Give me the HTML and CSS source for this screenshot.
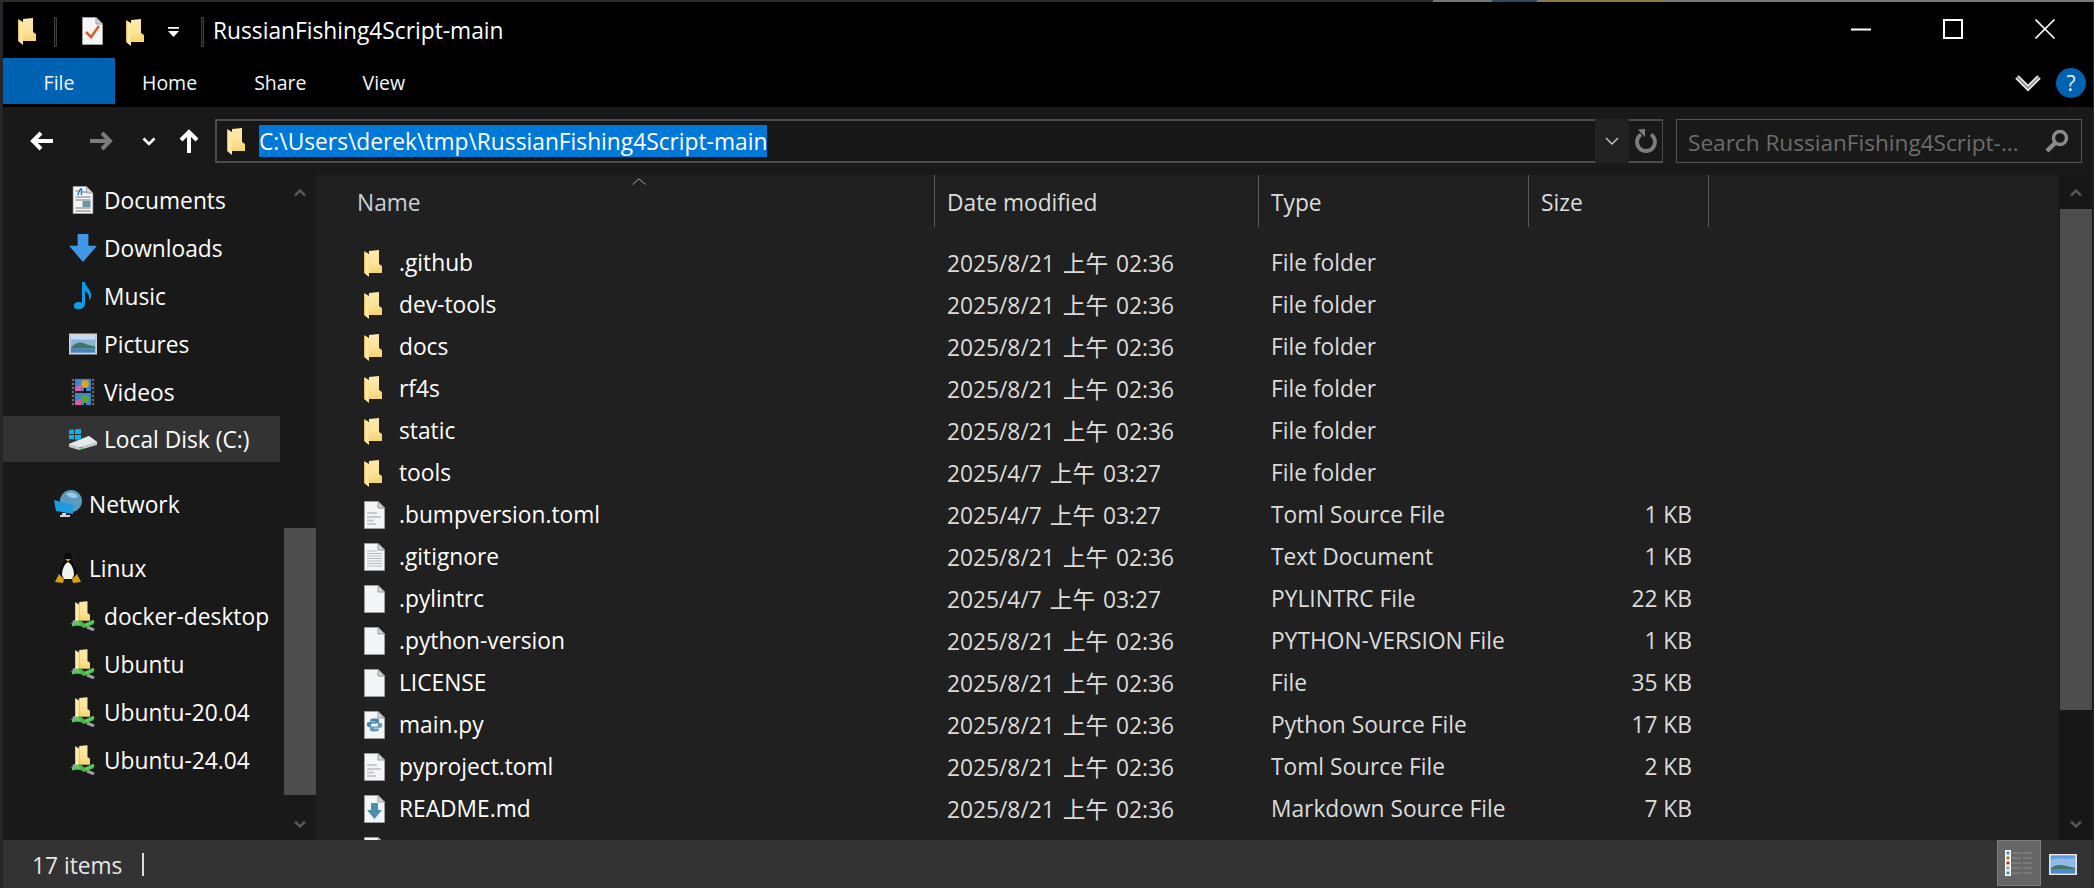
FILE: index.html
```html
<!DOCTYPE html>
<html lang="en">
<head>
<meta charset="utf-8">
<title>RussianFishing4Script-main</title>
<link rel="stylesheet" href="styles.css">
</head>
<body>
<svg class="defs" width="0" height="0" aria-hidden="true">
  <defs>
    <linearGradient id="flap" x1="0" x2="1" y1="0" y2="0"><stop offset="0" stop-color="#dfae48"/><stop offset=".4" stop-color="#ffeeb4"/><stop offset="1" stop-color="#fbe08f"/></linearGradient>
    <linearGradient id="front" x1="0" x2="0" y1="0" y2="1"><stop offset="0" stop-color="#fdeaae"/><stop offset=".55" stop-color="#fde39a"/><stop offset="1" stop-color="#f7d272"/></linearGradient>
    <symbol id="folder" viewBox="0 0 18 27">
      <path d="M5 1L15 0V14L18 20V23H5Z" fill="url(#front)"/>
      <path d="M15 14L18 16V23H5L15 20Z" fill="#f8d778"/>
      <path d="M0 1L5 4V27L0 23Z" fill="url(#flap)"/>
    </symbol>
    <symbol id="page" viewBox="0 0 21 28">
      <path d="M.5.5H14L20.5 7V27.5H.5Z" fill="#f4f5f7" stroke="#9d9d9d"/>
      <path d="M14 .5V7H20.5Z" fill="#d4d4d4" stroke="#9d9d9d"/>
    </symbol>
    <symbol id="toml" viewBox="0 0 21 28">
      <use href="#page"/>
      <path d="M3 12H13M3 16H17M3 19.5H10M3 23H12" stroke="#c9cacb" stroke-width="2"/>
    </symbol>
    <symbol id="text" viewBox="0 0 21 28">
      <use href="#page"/>
      <path d="M3 8H13M3 10.5H18M3 13H18M3 15.500H18M3 18H18M3 20.500H18M3 23H18" stroke="#b9b9b9" stroke-width="1"/>
    </symbol>
    <symbol id="py" viewBox="0 0 21 28">
      <use href="#page"/>
      <g transform="translate(0,2.460) scale(1,.72)">
        <path d="M10 7C6 7 6 9 6 11H11V12H5C2 12 2 19 5 19H7V16C7 14 8 14 10 14H13C14 14 15 13 15 12V9C15 7 13 7 10 7Z" fill="#4a86a8"/>
        <path d="M11 25C15 25 15 23 15 21H10V20H16C19 20 19 13 16 13H14V16C14 18 13 18 11 18H8C7 18 6 19 6 20V23C6 25 8 25 11 25Z" fill="#5b9cb8"/>
      </g>
    </symbol>
    <symbol id="md" viewBox="0 0 21 28">
      <use href="#page"/>
      <path d="M7 8H14V15H18L10.500 24L3 15H7Z" fill="#4a8fb0"/>
    </symbol>
    <symbol id="mount" viewBox="0 0 24 30">
      <use href="#folder" x="4" y="0" width="15" height="23"/>
      <path d="M0 22L9 19L14 23L22 20L23 23L13 27L8 24L2 25Z" fill="#49b94a"/>
      <path d="M2 20L9 24M16 26L23 29" stroke="#9c9c9c" stroke-width="3"/>
      <path d="M1 24L8 22M14 24L23 20" stroke="#5ccb5a" stroke-width="3"/>
    </symbol>
    <symbol id="chev" viewBox="0 0 12 8">
      <path d="M1 6.500L6 1.500L11 6.500" fill="none" stroke="currentColor" stroke-width="2.500"/>
    </symbol>
  </defs>
</svg>

<div class="window">
  <header class="titlebar">
    <svg class="qa-folder-main"><use href="#folder"/></svg>
    <span class="qa-sep"></span>
    <svg class="qa-doc" viewBox="0 0 21 28">
      <use href="#page"/>
      <path d="M4 15L9 20L17 9" fill="none" stroke="#e5582a" stroke-width="2.500"/>
    </svg>
    <svg class="qa-folder"><use href="#folder"/></svg>
    <svg class="qa-drop" viewBox="0 0 10 9"><path d="M0 0H10V1.500H0ZM0 3.500H10L5 9Z" fill="#fff"/></svg>
    <span class="qa-sep qa-sep-last"></span>
    <span class="title">RussianFishing4Script-main</span>
    <div class="caption">
      <svg class="cap-btn" viewBox="0 0 21 21"><path d="M0 10.500H20" stroke="#fff" stroke-width="2"/></svg>
      <svg class="cap-btn" viewBox="0 0 21 21"><rect x="1" y="1" width="18" height="18" fill="none" stroke="#fff" stroke-width="2"/></svg>
      <svg class="cap-btn" viewBox="0 0 21 21"><path d="M.5.500L19.500 19.500M19.500.500L.5 19.500" stroke="#fff" stroke-width="1.600"/></svg>
    </div>
  </header>

  <nav class="ribbon">
    <span class="tab tab-file">File</span>
    <span class="tab tab-home">Home</span>
    <span class="tab tab-share">Share</span>
    <span class="tab tab-view">View</span>
    <svg class="ribbon-collapse" viewBox="0 0 26 18"><path d="M2 3L13 14L24 3" fill="none" stroke="#e4e4e4" stroke-width="5"/><path d="M2 3L13 14L24 3" fill="none" stroke="#8a8a8a" stroke-width="1.500"/></svg>
    <span class="help">?</span>
  </nav>

  <div class="addressbar">
    <svg class="nav-arrow nav-back" viewBox="0 0 24 20"><path d="M23 10H3M11 2L3 10L11 18" fill="none" stroke="#fff" stroke-width="4"/></svg>
    <svg class="nav-arrow nav-forward" viewBox="0 0 24 20"><path d="M1 10H21M13 2L21 10L13 18" fill="none" stroke="#7b7b7b" stroke-width="4"/></svg>
    <svg class="nav-recent" viewBox="0 0 14 9"><path d="M1.500 1.500L7 7L12.500 1.500" fill="none" stroke="#fff" stroke-width="2.600"/></svg>
    <svg class="nav-up" viewBox="0 0 20 24"><path d="M10 24V3M2 11L10 3L18 11" fill="none" stroke="#fff" stroke-width="4"/></svg>
    <div class="address">
      <svg class="addr-folder"><use href="#folder"/></svg>
      <span class="addr-text">C:\Users\derek\tmp\RussianFishing4Script-main</span>
      <span class="addr-drop"><svg class="addr-chev" viewBox="0 0 14 8"><path d="M1 1L7 7L13 1" fill="none" stroke="#c8c8c8" stroke-width="1.400"/></svg></span>
      <span class="addr-refresh"><svg class="refresh" viewBox="0 0 22 24"><path d="M6 5.500A9 9 0 1 0 16 5.500" fill="none" stroke="#7d7d7d" stroke-width="3.800"/><path d="M3 .5L10 0V8Z" fill="#7d7d7d"/></svg></span>
    </div>
    <div class="search">
      <span class="search-text">Search RussianFishing4Script-...</span>
      <svg class="search-icon" viewBox="0 0 24 24"><circle cx="15" cy="9" r="6.500" fill="none" stroke="#8c8c8c" stroke-width="3.400"/><path d="M10 14L2 22" stroke="#8c8c8c" stroke-width="4.500"/></svg>
    </div>
  </div>

  <main class="content">
    <aside class="navpane">
      <ul class="tree">
        <li class="item lvl2">
          <svg class="ic" viewBox="0 0 21 28"><use href="#page"/><path d="M3 5H7M9 6H14M3 11H18M3 14H18M3 22H18M3 25H18" stroke="#777" stroke-width="1"/><path d="M5 9L8 3H9V9" fill="none" stroke="#2a7cc4" stroke-width="1.500"/><rect x="10" y="15" width="8" height="6" fill="#6a97a0"/></svg>
          <span>Documents</span>
        </li>
        <li class="item lvl2">
          <svg class="ic" viewBox="0 0 26 26"><path d="M8 0H18V11H26L13 26L0 11H8Z" fill="#3f97e5"/></svg>
          <span>Downloads</span>
        </li>
        <li class="item lvl2">
          <svg class="ic" viewBox="0 0 20 28"><path d="M9 0H12C12 5 19 7 18 15C17.500 17 16.500 18 16 18C17 13 14 10 12 9V22C12 26 7 28 3 27C-1 25 1 20 5 20C7 20 8 20 9 21Z" fill="#0d9be6"/></svg>
          <span>Music</span>
        </li>
        <li class="item lvl2">
          <svg class="ic" viewBox="0 0 28 21"><rect x=".75" y=".75" width="26.500" height="19.500" fill="#8fb4d6" stroke="#cfd3d6" stroke-width="1.500"/><path d="M2 6H26V1.500H2Z" fill="#c5def3"/><path d="M2 14C8 8 12 8 18 11L26 13V15H2Z" fill="#3f7565"/><rect x="2" y="15" width="24" height="4" fill="#4a86bb"/></svg>
          <span>Pictures</span>
        </li>
        <li class="item lvl2">
          <svg class="ic" viewBox="0 0 24 28"><rect width="24" height="28" fill="#222"/><path d="M2 1V28M22 1V28" stroke="#6a6a6a" stroke-width="2" stroke-dasharray="2 2"/><rect x="4" y="1" width="16" height="12" fill="#3f82cf"/><rect x="4" y="15" width="16" height="12" fill="#3f82cf"/><path d="M4 9L10 7L10 13H4ZM4 23L10 21V27H4Z" fill="#d85fa8"/><circle cx="14" cy="6" r="4" fill="#d2a72c"/><circle cx="14" cy="21" r="4" fill="#5aa53a"/><path d="M14 10V15M14 25V27" stroke="#000" stroke-width="2"/></svg>
          <span>Videos</span>
        </li>
        <li class="item lvl2 selected">
          <svg class="ic ic-disk" viewBox="0 0 28 21"><path d="M0 15L20 7L28 13V16L10 21L0 18Z" fill="#c6c9cc"/><path d="M0 15L10 18L28 13L20 7Z" fill="#e6e8ea"/><rect x="10" y="18" width="4" height="1.500" fill="#41c050"/><path d="M0 1L5 .4V5H0ZM6 .3L12 0V5H6ZM0 6H5V10.500L0 10ZM6 6H12V11L6 10.600Z" fill="#08b3ef"/></svg>
          <span>Local Disk (C:)</span>
        </li>
        <li class="item lvl1 group">
          <svg class="ic" viewBox="0 0 28 28"><circle cx="17" cy="11" r="11" fill="#5c9ac2"/><path d="M12 4C17 1 22 3 24 7C21 9 15 8 12 4Z" fill="#9fc7de"/><path d="M0 10L19 15V24L2 21Z" fill="#1a9de0"/><path d="M8 23H12V25H16V27H6V25H8Z" fill="#cfd4d8"/></svg>
          <span>Network</span>
        </li>
        <li class="item lvl1 group">
          <svg class="ic ic-tall" viewBox="0 0 26 32"><path d="M13 0C8 0 8 5 8 9C8 12 3 16 3 23L5 27H21L23 23C23 16 18 12 18 9C18 5 18 0 13 0Z" fill="#0c0c0c" stroke="#333" stroke-width=".5"/><path d="M13 10C9 12 7 18 7 23L9 27H17L19 23C19 18 17 12 13 10Z" fill="#f3f3f3"/><path d="M10 7H16L13 9.500Z" fill="#d7a016"/><path d="M4 22L9 27L8 31L0 30ZM22 22L17 27L18 31L26 30Z" fill="#d7a016"/></svg>
          <span>Linux</span>
        </li>
        <li class="item lvl2"><svg class="ic ic-mount"><use href="#mount"/></svg><span>docker-desktop</span></li>
        <li class="item lvl2"><svg class="ic ic-mount"><use href="#mount"/></svg><span>Ubuntu</span></li>
        <li class="item lvl2"><svg class="ic ic-mount"><use href="#mount"/></svg><span>Ubuntu-20.04</span></li>
        <li class="item lvl2"><svg class="ic ic-mount"><use href="#mount"/></svg><span>Ubuntu-24.04</span></li>
      </ul>
      <div class="vscroll vscroll-nav">
        <svg class="sb-up"><use href="#chev"/></svg>
        <span class="sb-thumb"></span>
        <svg class="sb-down"><use href="#chev"/></svg>
      </div>
    </aside>

    <section class="list">
      <div class="files">
        <div class="row head">
          <span class="cell name">Name</span><span class="cell date">Date modified</span><span class="cell type">Type</span><span class="cell size">Size</span>
          <svg class="sort" viewBox="0 0 14 7"><path d="M.5 6.500L7 .8L13.500 6.500" fill="none" stroke="#a8a8a8" stroke-width="1"/></svg>
        </div>
        <div class="row file"><span class="cell name"><svg class="fi-folder"><use href="#folder"/></svg><span class="label">.github</span></span><span class="cell date"><span class="label">2025/8/21 上午 02:36</span></span><span class="cell type"><span class="label">File folder</span></span><span class="cell size"></span></div>
        <div class="row file"><span class="cell name"><svg class="fi-folder"><use href="#folder"/></svg><span class="label">dev-tools</span></span><span class="cell date"><span class="label">2025/8/21 上午 02:36</span></span><span class="cell type"><span class="label">File folder</span></span><span class="cell size"></span></div>
        <div class="row file"><span class="cell name"><svg class="fi-folder"><use href="#folder"/></svg><span class="label">docs</span></span><span class="cell date"><span class="label">2025/8/21 上午 02:36</span></span><span class="cell type"><span class="label">File folder</span></span><span class="cell size"></span></div>
        <div class="row file"><span class="cell name"><svg class="fi-folder"><use href="#folder"/></svg><span class="label">rf4s</span></span><span class="cell date"><span class="label">2025/8/21 上午 02:36</span></span><span class="cell type"><span class="label">File folder</span></span><span class="cell size"></span></div>
        <div class="row file"><span class="cell name"><svg class="fi-folder"><use href="#folder"/></svg><span class="label">static</span></span><span class="cell date"><span class="label">2025/8/21 上午 02:36</span></span><span class="cell type"><span class="label">File folder</span></span><span class="cell size"></span></div>
        <div class="row file"><span class="cell name"><svg class="fi-folder"><use href="#folder"/></svg><span class="label">tools</span></span><span class="cell date"><span class="label">2025/4/7 上午 03:27</span></span><span class="cell type"><span class="label">File folder</span></span><span class="cell size"></span></div>
        <div class="row file"><span class="cell name"><svg class="fi-page"><use href="#toml"/></svg><span class="label">.bumpversion.toml</span></span><span class="cell date"><span class="label">2025/4/7 上午 03:27</span></span><span class="cell type"><span class="label">Toml Source File</span></span><span class="cell size"><span class="label">1 KB</span></span></div>
        <div class="row file"><span class="cell name"><svg class="fi-page"><use href="#text"/></svg><span class="label">.gitignore</span></span><span class="cell date"><span class="label">2025/8/21 上午 02:36</span></span><span class="cell type"><span class="label">Text Document</span></span><span class="cell size"><span class="label">1 KB</span></span></div>
        <div class="row file"><span class="cell name"><svg class="fi-page"><use href="#page"/></svg><span class="label">.pylintrc</span></span><span class="cell date"><span class="label">2025/4/7 上午 03:27</span></span><span class="cell type"><span class="label">PYLINTRC File</span></span><span class="cell size"><span class="label">22 KB</span></span></div>
        <div class="row file"><span class="cell name"><svg class="fi-page"><use href="#page"/></svg><span class="label">.python-version</span></span><span class="cell date"><span class="label">2025/8/21 上午 02:36</span></span><span class="cell type"><span class="label">PYTHON-VERSION File</span></span><span class="cell size"><span class="label">1 KB</span></span></div>
        <div class="row file"><span class="cell name"><svg class="fi-page"><use href="#page"/></svg><span class="label">LICENSE</span></span><span class="cell date"><span class="label">2025/8/21 上午 02:36</span></span><span class="cell type"><span class="label">File</span></span><span class="cell size"><span class="label">35 KB</span></span></div>
        <div class="row file"><span class="cell name"><svg class="fi-page"><use href="#py"/></svg><span class="label">main.py</span></span><span class="cell date"><span class="label">2025/8/21 上午 02:36</span></span><span class="cell type"><span class="label">Python Source File</span></span><span class="cell size"><span class="label">17 KB</span></span></div>
        <div class="row file"><span class="cell name"><svg class="fi-page"><use href="#toml"/></svg><span class="label">pyproject.toml</span></span><span class="cell date"><span class="label">2025/8/21 上午 02:36</span></span><span class="cell type"><span class="label">Toml Source File</span></span><span class="cell size"><span class="label">2 KB</span></span></div>
        <div class="row file"><span class="cell name"><svg class="fi-page"><use href="#md"/></svg><span class="label">README.md</span></span><span class="cell date"><span class="label">2025/8/21 上午 02:36</span></span><span class="cell type"><span class="label">Markdown Source File</span></span><span class="cell size"><span class="label">7 KB</span></span></div>
        <div class="row file"><span class="cell name"><svg class="fi-page"><use href="#text"/></svg></span><span class="cell date"><span class="label">2025/8/21 上午 02:36</span></span><span class="cell type"></span><span class="cell size"></span></div>
      </div>
      <div class="vscroll vscroll-list">
        <svg class="sb-up"><use href="#chev"/></svg>
        <span class="sb-thumb"></span>
        <svg class="sb-down"><use href="#chev"/></svg>
      </div>
    </section>
  </main>

  <footer class="status">
    <span class="count">17 items</span>
    <span class="status-sep"></span>
    <span class="view-details">
      <svg class="details-icon" viewBox="0 0 28 26"><rect width="6" height="26" fill="#fff"/><rect x="1.500" y="1.500" width="3" height="3" fill="#3f8fb5"/><rect x="1.500" y="6.500" width="3" height="3" fill="#8a7f24"/><rect x="1.500" y="11.500" width="3" height="3" fill="#c0281e"/><rect x="1.500" y="16.500" width="3" height="3" fill="#7fa07f"/><rect x="1.500" y="21.500" width="3" height="3" fill="#3f8fb5"/><path d="M7 3H16M18 3H27M7 8H16M18 8H27M7 13H16M18 13H27M7 18H16M18 18H27M7 23H16M18 23H27" stroke="#8d8d8d" stroke-width="1"/></svg>
    </span>
    <svg class="view-large" viewBox="0 0 28 21"><rect x=".75" y=".75" width="26.500" height="19.500" fill="#8fbbe6" stroke="#e6e6e6" stroke-width="1.500"/><path d="M2 6C8 3 14 6 26 4V1.500H2Z" fill="#5f9de0"/><path d="M2 14C8 9 14 11 26 14V15H2Z" fill="#3f7565"/><rect x="2" y="15" width="24" height="4.500" fill="#4e8ac6"/></svg>
  </footer>
</div>
</body>
</html>
```

FILE: styles.css
```css
* { box-sizing: border-box; }

html, body {
  margin: 0;
  height: 100%;
  overflow: hidden;
}

html {
  background: #24262b;
}

body {
  padding: 2px 1px 0 3px;
  background: linear-gradient(90deg, #2d2d30 0 1433px, #777 1433px 1492px, #334a5e 1492px 1537px, #777 1537px 1543px, #8a7a3c 1543px 1664px, #7a7a7a 1664px) top / 100% 2px no-repeat;
  font-family: "Open Sans", "Noto Sans CJK TC", sans-serif;
  font-size: 22.75px;
  color: #fff;
}

.defs { position: absolute; }

.window {
  height: 886px;
  display: flex;
  flex-direction: column;
  background: #000;
}

/* title bar */
.titlebar {
  height: 56px;
  flex: none;
  display: flex;
  align-items: center;
  padding-left: 15px;
  background: #000;
}
.qa-folder-main { width: 18px; height: 27px; margin-top: 3px; }
.qa-sep { width: 3px; height: 30px; border: 1px solid #3f3f3f; background: #111; margin-left: 18px; margin-top: 3px; }
.qa-doc { width: 21px; height: 28px; margin-left: 25px; margin-top: 2px; }
.qa-folder { width: 18px; height: 27px; margin-left: 23px; margin-top: 5px; }
.qa-drop { width: 11px; height: 10px; margin-left: 24px; margin-top: 3px; }
.qa-sep-last { margin-left: 22px; }
.title { margin-left: 9px; font-size: 22.75px; line-height: 30px; margin-top: 2px; }
.caption { margin-left: auto; display: flex; gap: 71px; padding-right: 37px; margin-top: -2px; }
.cap-btn { width: 21px; height: 21px; }

/* ribbon */
.ribbon {
  height: 49px;
  flex: none;
  display: flex;
  align-items: flex-start;
  background: #000;
}
.tab { display: block; line-height: 50px; height: 46px; font-size: 19.500px; color: #f2f5f8; }
.tab-file { width: 112px; background: #0063b1; text-align: center; }
.tab-home { margin-left: 27px; }
.tab-share { margin-left: 57px; }
.tab-view { margin-left: 56px; }
.ribbon-collapse { width: 26px; height: 18px; margin-left: auto; margin-top: 16px; }
.help {
  width: 30px; height: 30px; margin: 10px 7px 0 15px;
  border-radius: 50%;
  background: #0063b1;
  text-align: center;
  line-height: 30px;
  font-size: 21px;
  color: #e8f0f8;
}

/* address bar */
.addressbar {
  height: 68px;
  flex: none;
  display: flex;
  align-items: center;
  background: #191919;
  padding-left: 27px;
}
.nav-arrow { width: 24px; height: 20px; }
.nav-forward { margin-left: 35px; }
.nav-recent { width: 14px; height: 9px; margin-left: 29px; }
.nav-up { width: 20px; height: 24px; margin-left: 23px; }
.address {
  width: 1448px;
  height: 44px;
  margin-left: 16px;
  display: flex;
  align-items: center;
  border: 2px solid #4c4c4c;
  border-right-width: 1px;
  background: #171717;
}
.addr-folder { width: 18px; height: 27px; margin-left: 10px; }
.addr-text {
  margin-left: 14px;
  height: 32px;
  line-height: 34px;
  background: #0078d7;
  font-size: 22.75px;
  white-space: nowrap;
}
.addr-drop {
  margin-left: auto;
  width: 34px;
  align-self: stretch;
  background: #222;
  display: flex;
  align-items: center;
  justify-content: center;
  margin-top: -2px;
  margin-bottom: -2px;
}
.addr-chev { width: 14px; height: 8px; }
.addr-refresh { width: 33px; display: flex; justify-content: center; background: #191919; align-self: stretch; align-items: center; }
.refresh { width: 22px; height: 24px; }
.search {
  width: 406px;
  height: 44px;
  margin-left: 13px;
  display: flex;
  align-items: center;
  border: 1px solid #555;
  padding: 0 12px 0 11px;
  color: #6c6c6c;
}
.search-text { font-size: 22.6px; white-space: nowrap; margin-top: 2px; }
.search-icon { width: 24px; height: 24px; margin-left: auto; }

/* content */
.content {
  flex: 1;
  min-height: 0;
  display: flex;
  background: #191919;
}
.navpane {
  width: 315px;
  flex: none;
  display: flex;
  background: #191919;
  border-right: 2px solid #1d1d1d;
}
.tree {
  list-style: none;
  width: 277px;
  margin: 0;
  padding: 1px 0 0;
  flex: none;
}
.item {
  height: 48px;
  display: flex;
  align-items: center;
  white-space: nowrap;
  font-size: 22.75px;
}
.item.selected { background: #333; height: 46px; }
.item.group { margin-top: 16px; }
.item.selected + .group { margin-top: 18px; }
.lvl2 { padding-left: 66px; }
.lvl1 { padding-left: 51px; }
.ic { width: 28px; height: 28px; flex: none; margin-right: 7px; }
.ic-disk { height: 21px; }
.ic-tall { height: 32px; }
.ic-mount { height: 30px; }

.vscroll {
  display: flex;
  flex-direction: column;
  align-items: center;
  flex: none;
  color: #555;
}
.sb-up { width: 12px; height: 8px; margin-top: 14px; flex: none; }
.sb-down { width: 12px; height: 8px; transform: rotate(180deg); flex: none; margin-top: auto; margin-bottom: 12px; }
.sb-thumb { display: block; width: 100%; background: #4d4d4d; flex: none; }

.vscroll-nav { width: 32px; margin-left: 4px; }
.vscroll-nav .sb-thumb { height: 267px; margin-top: 331px; }

.list {
  flex: 1;
  min-width: 0;
  display: flex;
  background: #202020;
}
.files { flex: 1; min-width: 0; overflow: hidden; }
.row {
  display: grid;
  grid-template-columns: 617px 324px 270px 180px;
  align-items: center;
  white-space: nowrap;
}
.head { height: 52px; position: relative; margin-bottom: 15px; color: #c9d0d6; }
.head .cell { height: 52px; padding-top: 3px; border-right: 1px solid #5a5a5a; }
.head .name { padding-left: 39px; }
.sort { position: absolute; left: 314px; top: 3px; width: 14px; height: 7px; }
.file { height: 42px; }
.cell { display: flex; align-items: center; }
.label { display: block; margin-top: -2px; }
.date { padding-left: 12px; color: #dcdcdc; }
.file .date { word-spacing: 2px; }
.type { padding-left: 12px; color: #dcdcdc; }
.size { padding-left: 12px; color: #dcdcdc; }
.file .size { justify-content: flex-end; padding-right: 17px; }
.file .name { padding-left: 46px; }
.fi-folder { width: 18px; height: 27px; margin-right: 17px; flex: none; }
.fi-page { width: 21px; height: 28px; margin-right: 14px; flex: none; }

.vscroll-list { width: 34px; background: #171717; }
.vscroll-list .sb-thumb { height: 501px; margin-top: 12px; width: 32px; }

/* status bar */
.status {
  height: 48px;
  flex: none;
  display: flex;
  align-items: center;
  background: #333;
  padding-left: 29px;
}
.count { font-size: 22.750px; color: #e6e6e6; margin-top: 2px; }
.status-sep { width: 2px; height: 23px; background: #ddd; margin-left: 20px; }
.view-details {
  width: 44px;
  height: 46px;
  margin-left: auto;
  align-self: flex-start;
  display: flex;
  align-items: center;
  justify-content: center;
  background: #666;
  border: 1px solid #7e7e7e;
}
.details-icon { width: 28px; height: 26px; }
.view-large { width: 28px; height: 21px; margin-left: 8px; margin-right: 16px; }
```
